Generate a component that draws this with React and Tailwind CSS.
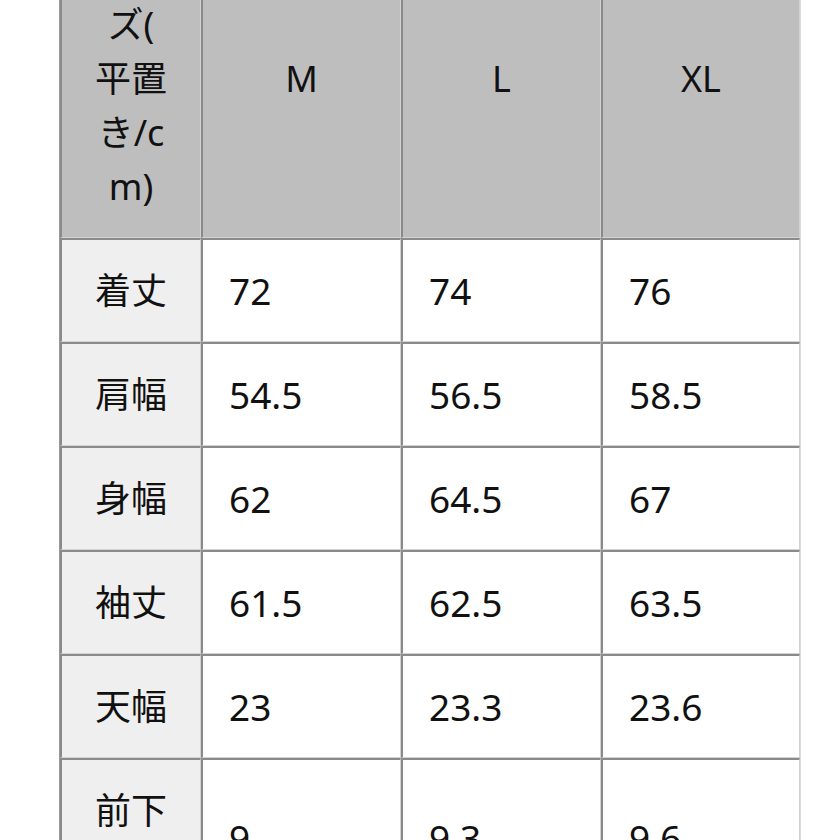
import React from "react";

const rows = [
    { label: ["着丈"], m: "72", l: "74", xl: "76" },
    { label: ["肩幅"], m: "54.5", l: "56.5", xl: "58.5" },
    { label: ["身幅"], m: "62", l: "64.5", xl: "67" },
    { label: ["袖丈"], m: "61.5", l: "62.5", xl: "63.5" },
    { label: ["天幅"], m: "23", l: "23.3", xl: "23.6" },
    { label: ["前下", "がり"], m: "9", l: "9.3", xl: "9.6" },
];

const cell = "border-t-2 border-l-2 border-t-[#8a8a8a] border-l-[#8a8a8a] border-b border-r border-b-[#d2d2d2] border-r-[#d2d2d2] py-[23.5px] align-middle";

const App = () => {
    return (
        <div className="w-[840px] h-[840px] overflow-hidden bg-white text-[#111] font-['Noto_Sans','Noto_Sans_CJK_JP',sans-serif] text-[36px] leading-[54px]">
            <div className="pl-[59px] -mt-[82px]">
                <table className="table-fixed border-separate border-spacing-0 border-l border-l-[#9a9a9a] border-r border-r-[#dadada] w-[740px]">
                    <colgroup>
                        <col className="w-[141px]" />
                        <col className="w-[200px]" />
                        <col className="w-[200px]" />
                        <col className="w-[199px]" />
                    </colgroup>
                    <thead>
                        <tr className="bg-[#bebebe]">
                            <th className={`${cell} font-normal text-center`}>
                                サイ<br />ズ(<br />平置<br />き/c<br />m)
                            </th>
                            <th className={`${cell} font-normal text-center`}>M</th>
                            <th className={`${cell} font-normal text-center`}>L</th>
                            <th className={`${cell} font-normal text-center`}>XL</th>
                        </tr>
                    </thead>
                    <tbody>
                        {rows.map((r) => (
                            <tr key={r.label.join("")}>
                                <td className={`${cell} bg-[#efefef] text-center`}>
                                    {r.label.map((t, i) => (
                                        <div key={i}>{t}</div>
                                    ))}
                                </td>
                                <td className={`${cell} bg-white pl-[26px] text-[37px]`}>{r.m}</td>
                                <td className={`${cell} bg-white pl-[26px] text-[37px]`}>{r.l}</td>
                                <td className={`${cell} bg-white pl-[26px] text-[37px]`}>{r.xl}</td>
                            </tr>
                        ))}
                    </tbody>
                </table>
            </div>
        </div>
    );
};

export default App;
